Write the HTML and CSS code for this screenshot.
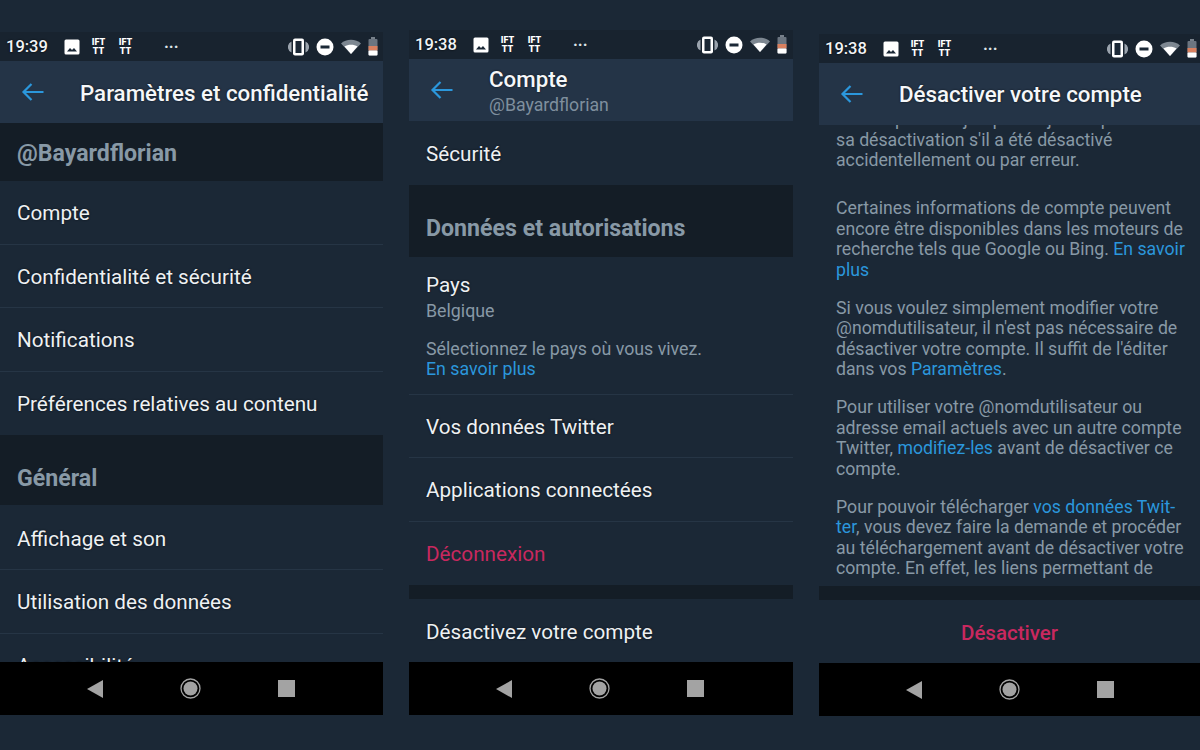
FILE: index.html
```html
<!DOCTYPE html>
<html lang="fr">
<head>
    <meta charset="UTF-8">
    <meta name="viewport" content="width=device-width, initial-scale=1.0">
    <title>Paramètres Twitter</title>
    <link rel="stylesheet" href="styles.css">
</head>
<body>
    <svg class="defs" width="0" height="0">
        <symbol id="i-photo" viewBox="0 0 16 16"><rect x="0.5" y="0.5" width="15" height="15" rx="1.5" fill="#fff"/><path d="M3 12.5 6 9l2 2 2-2 3 3.500z" fill="#1b2836"/></symbol>
        <symbol id="i-vibrate" viewBox="0 0 21 18"><path d="M3.500 3.500A6 6 0 0 0 3.500 14.500zM17.500 3.500a6 6 0 0 1 0 11z" fill="#9aa3ad"/><rect x="5" y="0.500" width="11" height="17" rx="2" fill="#fff"/><rect x="7.500" y="3" width="6" height="12" fill="#1b2836"/></symbol>
        <symbol id="i-dnd" viewBox="0 0 18 18"><circle cx="9" cy="9" r="8.500" fill="#fff"/><rect x="4.500" y="7.500" width="9" height="3" fill="#1b2836"/></symbol>
        <symbol id="i-wifi" viewBox="0 0 20 15"><path d="M0 4.500C5 -0.500 15 -0.500 20 4.500L10 15z" fill="#7d8791"/><path d="M3.500 7.500C7 5 13 5 16.500 7.500L10 15z" fill="#fff"/></symbol>
        <symbol id="i-battery" viewBox="0 0 10 19"><rect x="3" y="0" width="4" height="2" fill="#77808a"/><rect x="0.500" y="2" width="9" height="16.500" rx="1" fill="#6b7580"/><rect x="0.500" y="9" width="9" height="4.500" fill="#d9805f"/><rect x="0.500" y="13.500" width="9" height="5" rx="1" fill="#fff"/></symbol>
        <symbol id="i-back" viewBox="0 0 24 20"><path d="M22.500 10H2.500M10.500 2l-8 8 8 8" fill="none" stroke="#2b97dc" stroke-width="2.200"/></symbol>
        <symbol id="i-tri" viewBox="0 0 16 18"><path d="M16 0v18L0 9z" fill="#a3a3a3"/></symbol>
        <symbol id="i-home" viewBox="0 0 21 21"><circle cx="10.500" cy="10.500" r="9.500" fill="none" stroke="#a3a3a3" stroke-width="1.300"/><circle cx="10.500" cy="10.500" r="7" fill="#a3a3a3"/></symbol>
    </svg>

    <div class="screens">
        <!-- ecran 1 -->
        <div class="phone phone-one">
            <div class="status">
                <span class="time">19:39</span>
                <svg class="ic-photo"><use href="#i-photo"/></svg>
                <span class="ifttt">IFT<br>TT</span>
                <span class="ifttt">IFT<br>TT</span>
                <span class="more">···</span>
                <span class="status-right">
                    <svg class="ic-vibrate"><use href="#i-vibrate"/></svg>
                    <svg class="ic-dnd"><use href="#i-dnd"/></svg>
                    <svg class="ic-wifi"><use href="#i-wifi"/></svg>
                    <svg class="ic-battery"><use href="#i-battery"/></svg>
                </span>
            </div>
            <div class="header">
                <svg class="ic-back"><use href="#i-back"/></svg>
                <div class="title">Paramètres et confidentialité</div>
            </div>
            <div class="content">
                <div class="section section-first">@Bayardflorian</div>
                <div class="row">Compte</div>
                <div class="row">Confidentialité et sécurité</div>
                <div class="row">Notifications</div>
                <div class="row row-last">Préférences relatives au contenu</div>
                <div class="section">Général</div>
                <div class="row row-tall">Affichage et son</div>
                <div class="row">Utilisation des données</div>
                <div class="row row-last">Accessibilité</div>
            </div>
            <div class="nav">
                <svg class="ic-tri"><use href="#i-tri"/></svg>
                <svg class="ic-home"><use href="#i-home"/></svg>
                <span class="nav-square"></span>
            </div>
        </div>

        <!-- ecran 2 -->
        <div class="phone phone-two">
            <div class="status">
                <span class="time">19:38</span>
                <svg class="ic-photo"><use href="#i-photo"/></svg>
                <span class="ifttt">IFT<br>TT</span>
                <span class="ifttt">IFT<br>TT</span>
                <span class="more">···</span>
                <span class="status-right">
                    <svg class="ic-vibrate"><use href="#i-vibrate"/></svg>
                    <svg class="ic-dnd"><use href="#i-dnd"/></svg>
                    <svg class="ic-wifi"><use href="#i-wifi"/></svg>
                    <svg class="ic-battery"><use href="#i-battery"/></svg>
                </span>
            </div>
            <div class="header">
                <svg class="ic-back"><use href="#i-back"/></svg>
                <div>
                    <div class="title">Compte</div>
                    <div class="subtitle">@Bayardflorian</div>
                </div>
            </div>
            <div class="content">
                <div class="row row-last">Sécurité</div>
                <div class="section section-tall">Données et autorisations</div>
                <div class="row-block">
                    <div class="row-name">Pays</div>
                    <div class="row-value">Belgique</div>
                    <div class="row-note">Sélectionnez le pays où vous vivez.<br><a class="link">En savoir plus</a></div>
                </div>
                <div class="row">Vos données Twitter</div>
                <div class="row">Applications connectées</div>
                <div class="row row-last row-danger">Déconnexion</div>
                <div class="spacer"></div>
                <div class="row row-last">Désactivez votre compte</div>
            </div>
            <div class="nav">
                <svg class="ic-tri"><use href="#i-tri"/></svg>
                <svg class="ic-home"><use href="#i-home"/></svg>
                <span class="nav-square"></span>
            </div>
        </div>

        <!-- ecran 3 -->
        <div class="phone phone-three">
            <div class="status">
                <span class="time">19:38</span>
                <svg class="ic-photo"><use href="#i-photo"/></svg>
                <span class="ifttt">IFT<br>TT</span>
                <span class="ifttt">IFT<br>TT</span>
                <span class="more">···</span>
                <span class="status-right">
                    <svg class="ic-vibrate"><use href="#i-vibrate"/></svg>
                    <svg class="ic-dnd"><use href="#i-dnd"/></svg>
                    <svg class="ic-wifi"><use href="#i-wifi"/></svg>
                    <svg class="ic-battery"><use href="#i-battery"/></svg>
                </span>
            </div>
            <div class="header">
                <svg class="ic-back"><use href="#i-back"/></svg>
                <div class="title">Désactiver votre compte</div>
            </div>
            <div class="content">
                <div class="scroll">
                    <p class="para para-first">Twitter pendant jusqu'à 30 jours après<br>sa désactivation s'il a été désactivé<br>accidentellement ou par erreur.</p>
                    <p class="para">Certaines informations de compte peuvent<br>encore être disponibles dans les moteurs de<br>recherche tels que Google ou Bing. <a class="link">En savoir</a><br><a class="link">plus</a></p>
                    <p class="para">Si vous voulez simplement modifier votre<br>@nomdutilisateur, il n'est pas nécessaire de<br>désactiver votre compte. Il suffit de l'éditer<br>dans vos <a class="link">Paramètres</a>.</p>
                    <p class="para">Pour utiliser votre @nomdutilisateur ou<br>adresse email actuels avec un autre compte<br>Twitter, <a class="link">modifiez-les</a> avant de désactiver ce<br>compte.</p>
                    <p class="para">Pour pouvoir télécharger <a class="link">vos données Twit-</a><br><a class="link">ter</a>, vous devez faire la demande et procéder<br>au téléchargement avant de désactiver votre<br>compte. En effet, les liens permettant de</p>
                </div>
                <div class="spacer"></div>
                <div class="action">Désactiver</div>
            </div>
            <div class="nav">
                <svg class="ic-tri"><use href="#i-tri"/></svg>
                <svg class="ic-home"><use href="#i-home"/></svg>
                <span class="nav-square"></span>
            </div>
        </div>
    </div>
</body>
</html>
```

FILE: styles.css
```css
html, body {
    margin: 0;
    height: 750px;
    overflow: hidden;
}
body {
    background-color: #1b2836;
    font-family: Roboto, "Liberation Sans", sans-serif;
    color: #f2f4f6;
}
.defs {
    display: block;
    height: 0;
}
.screens {
    display: flex;
    gap: 26px;
    align-items: flex-start;
}
.phone {
    display: flex;
    flex-direction: column;
    flex: none;
    width: 383px;
    height: 683px;
    overflow: hidden;
}
.phone-one {
    margin-top: 32px;
}
.phone-two {
    width: 384px;
    margin-top: 30px;
    height: 685px;
}
.phone-three {
    width: 381px;
    margin-top: 34px;
    height: 682px;
}

/* barre de statut */
.status {
    display: flex;
    align-items: center;
    flex: none;
    height: 29px;
    padding-left: 6px;
    background-color: #18232f;
}
.time {
    width: 45px;
    font-size: 16.500px;
    font-weight: 500;
    text-shadow: 0 0 2px #000;
}
.ic-photo {
    width: 16px;
    height: 16px;
    margin-left: 13px;
}
.ifttt {
    width: 17px;
    margin-left: 10px;
    font-size: 9px;
    line-height: 9px;
    font-weight: 900;
    text-align: center;
    color: #fff;
}
.more {
    margin-left: 30px;
    font-size: 16px;
    font-weight: 700;
    color: #dfe3e7;
}
.status-right {
    display: flex;
    align-items: center;
    margin-left: 110px;
    gap: 7px;
}
.ic-vibrate {
    width: 21px;
    height: 18px;
}
.ic-dnd {
    width: 18px;
    height: 18px;
}
.ic-wifi {
    width: 20px;
    height: 15px;
}
.ic-battery {
    width: 10px;
    height: 19px;
}

/* en-tete */
.header {
    display: flex;
    align-items: center;
    flex: none;
    height: 62px;
    background-color: #243447;
}
.phone-one .header,
.phone-two .header {
    box-sizing: border-box;
    padding-top: 2px;
}
.ic-back {
    flex: none;
    width: 24px;
    height: 20px;
    margin-left: 21px;
    margin-right: 35px;
}
.phone-one .ic-back,
.phone-two .ic-back {
    margin-bottom: 2px;
}
.title {
    font-size: 22.300px;
    font-weight: 500;
    color: #f5f7f9;
    white-space: nowrap;
    text-shadow: 0 0 2px #0b1118;
}
.phone-two .title {
    line-height: 28px;
}
.subtitle {
    font-size: 17.700px;
    line-height: 25px;
    color: #7f8f9e;
}

/* contenu */
.content {
    display: flex;
    flex-direction: column;
    flex: 1;
    min-height: 0;
    overflow: hidden;
}
.section {
    display: flex;
    align-items: center;
    flex: none;
    box-sizing: border-box;
    height: 70px;
    padding-left: 17px;
    padding-top: 16px;
    background-color: #141d26;
    font-size: 23.150px;
    font-weight: 700;
    color: #8899a6;
}
.section-first {
    height: 58px;
    padding-top: 2px;
}
.section-tall {
    height: 72px;
    padding-top: 16px;
}
.row {
    display: flex;
    align-items: center;
    flex: none;
    box-sizing: border-box;
    height: 63.500px;
    padding-left: 17px;
    padding-top: 2px;
    border-bottom: 1px solid #263545;
    font-size: 20.700px;
    color: #eef1f3;
    text-shadow: 0 0 2px #0b1118;
}
.row-tall {
    height: 65px;
    padding-top: 3px;
}
.row-last {
    border-bottom: none;
}
.row-danger {
    color: #c9285f;
    text-shadow: none;
}
.row-block {
    flex: none;
    box-sizing: border-box;
    height: 138px;
    padding: 15px 17px 0;
    border-bottom: 1px solid #263545;
}
.row-name {
    font-size: 20.700px;
    line-height: 26px;
    color: #eef1f3;
    text-shadow: 0 0 2px #0b1118;
}
.row-value {
    margin-top: 2px;
    font-size: 17.800px;
    line-height: 22px;
    color: #8899a6;
}
.row-note {
    margin-top: 17px;
    font-size: 17.800px;
    line-height: 20.500px;
    color: #8899a6;
}
.link {
    color: #2b97dc;
}
.spacer {
    flex: none;
    height: 14px;
    background-color: #141d26;
}

/* texte ecran 3 */
.scroll {
    flex: 1;
    min-height: 0;
    overflow: hidden;
    padding: 0 17px;
}
.para {
    margin: 0 0 17.500px;
    font-size: 17.700px;
    line-height: 20.500px;
    color: #8899a6;
    white-space: nowrap;
}
.para-first {
    margin-top: -16px;
    margin-bottom: 27.500px;
}
.action {
    display: flex;
    align-items: center;
    justify-content: center;
    flex: none;
    box-sizing: border-box;
    height: 63px;
    padding-top: 2px;
    font-size: 20.500px;
    font-weight: 500;
    color: #c9285f;
}

/* barre de navigation */
.nav {
    display: flex;
    align-items: center;
    flex: none;
    height: 53px;
    padding-left: 87px;
    gap: 77px;
    background-color: #000;
}
.ic-tri {
    width: 16px;
    height: 18px;
}
.ic-home {
    width: 21px;
    height: 21px;
}
.nav-square {
    width: 17px;
    height: 17px;
    background-color: #a3a3a3;
}
```
